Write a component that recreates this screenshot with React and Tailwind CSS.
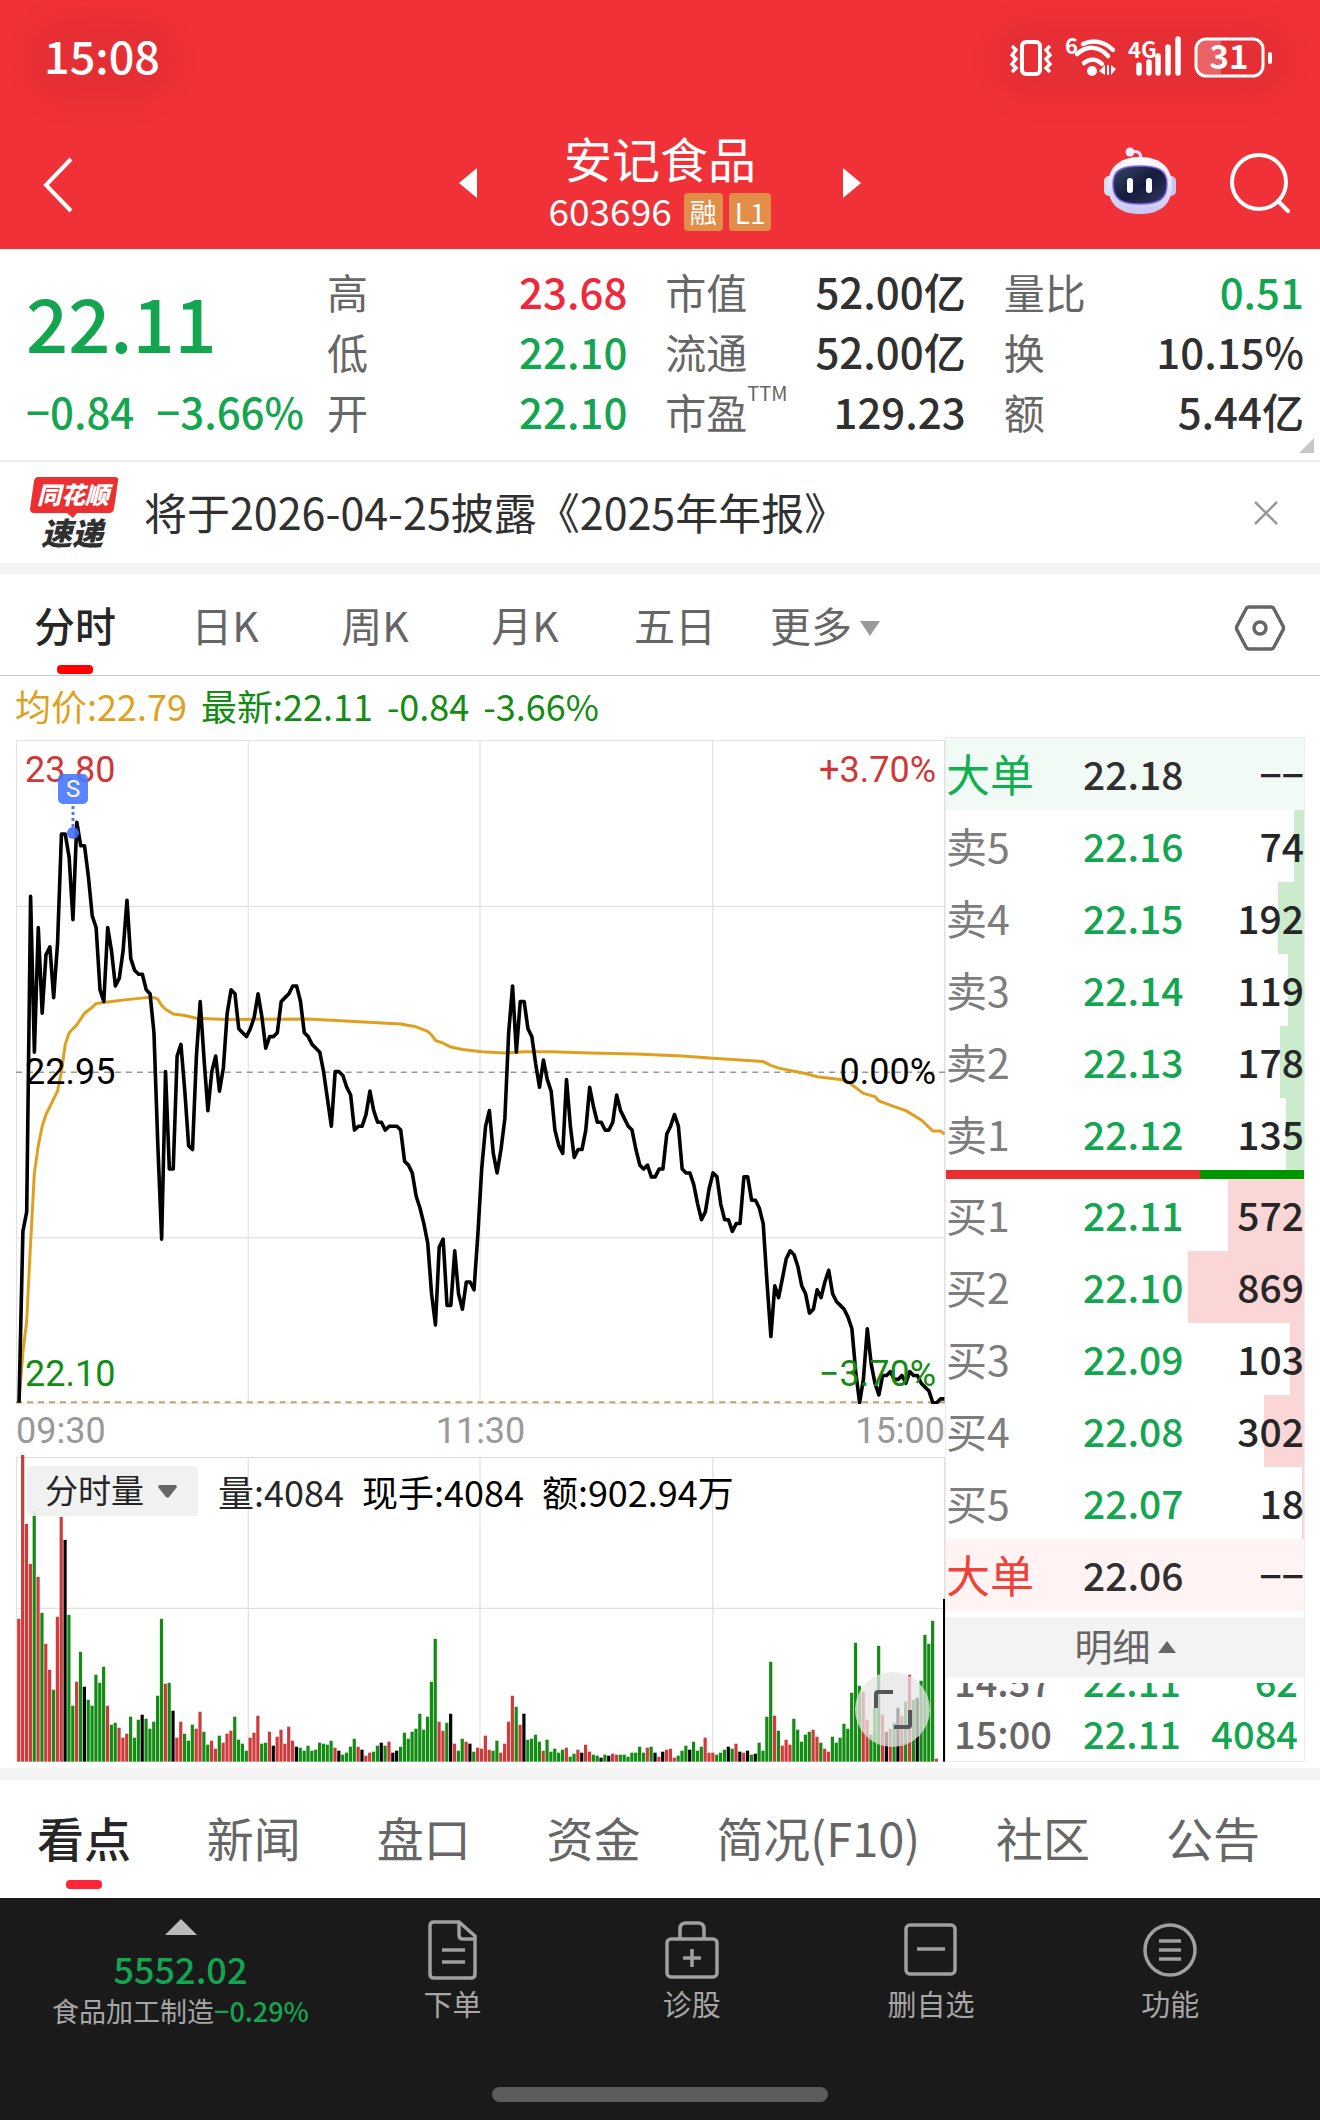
import React, { useState } from 'react';

const FONT = "font-['Noto_Sans_CJK_SC','Noto_Sans',sans-serif]";

const quoteColumns = [
    [
        { label: '高', value: '23.68', color: 'text-[#f0283c]' },
        { label: '低', value: '22.10', color: 'text-[#14a550]' },
        { label: '开', value: '22.10', color: 'text-[#14a550]' },
    ],
    [
        { label: '市值', value: '52.00亿', color: 'text-[#303030]' },
        { label: '流通', value: '52.00亿', color: 'text-[#303030]' },
        { label: '市盈', sup: 'TTM', value: '129.23', color: 'text-[#303030]' },
    ],
    [
        { label: '量比', value: '0.51', color: 'text-[#14a550]' },
        { label: '换', value: '10.15%', color: 'text-[#303030]' },
        { label: '额', value: '5.44亿', color: 'text-[#303030]' },
    ],
];

const asks = [
    ['卖5', '22.16', 74],
    ['卖4', '22.15', 192],
    ['卖3', '22.14', 119],
    ['卖2', '22.13', 178],
    ['卖1', '22.12', 135],
];

const bids = [
    ['买1', '22.11', 572],
    ['买2', '22.10', 869],
    ['买3', '22.09', 103],
    ['买4', '22.08', 302],
    ['买5', '22.07', 18],
];

// One value per minute, in cents above or below the previous close (22.95)
const prices = [
    -85, -41, -36, 45, 5, 37, 15, 30, 32, 19, 33, 61, 61, 55, 39, 64, 58, 58, 50, 40,
    37, 21, 18, 37, 31, 22, 24, 31, 44, 29, 26, 25, 25, 21, 20, 10, -19, -43, 0, -25,
    -25, 4, 7, -5, -19, -20, 4, 18, 3, -10, 0, 4, -5, 1, 15, 21, 20, 11, 10, 9,
    11, 14, 20, 14, 6, 9, 9, 10, 18, 19, 20, 22, 22, 18, 10, 9, 7, 6, 5, 0,
    -7, -14, 0, 0, -1, -4, -6, -15, -14, -14, -11, -5, -10, -13, -13, -15, -14, -14, -14, -15,
    -23, -24, -26, -32, -35, -39, -44, -57, -65, -45, -43, -60, -60, -46, -57, -61, -54, -54, -56, -42,
    -25, -14, -10, -21, -26, -20, -12, 10, 22, 5, 18, 18, 11, 9, 2, -4, 3, -2, -5, -15,
    -19, -21, -2, -14, -22, -20, -20, -15, -4, -9, -13, -13, -15, -15, -13, -6, -10, -12, -14, -15,
    -20, -24, -25, -24, -27, -27, -25, -25, -16, -14, -11, -14, -25, -26, -26, -29, -34, -38, -36, -30,
    -26, -27, -34, -38, -38, -41, -39, -39, -27, -27, -33, -33, -35, -39, -54, -68, -55, -58, -53, -48,
    -46, -47, -50, -55, -57, -62, -61, -56, -58, -54, -51, -57, -59, -60, -61, -63, -66, -77, -85, -79,
    -66, -75, -80, -83, -78, -78, -77, -79, -79, -78, -80, -77, -78, -78, -80, -81, -82, -85, -85, -84, -84,
];

// [minute, cents from previous close]
const average = [
    [0, -85], [1, -72], [2, -64], [3, -44], [4, -26], [5, -19], [6, -14], [7, -11], [8, -9], [9, -7],
    [10, -5], [11, 0], [12, 7], [13, 10], [14, 11], [15, 12], [17, 15], [19, 16.5], [20, 17.5], [24, 18],
    [28, 18.5], [33, 19], [35, 19], [36, 18.6], [37, 17], [38, 16], [40, 14.8], [43, 14.4], [46, 13.7],
    [54, 13.4], [75, 13.5], [99, 12.2], [103, 11.5], [106, 10.3], [107, 9.4], [108, 8], [110, 7.3],
    [112, 6.3], [115, 5.7], [120, 5.1], [126, 4.8], [131, 5.1], [138, 5.1], [148, 4.8], [160, 4.5],
    [172, 4], [180, 3.4], [193, 2.6], [195, 1.6], [197, 0.9], [200, 0.3], [204, -0.5], [207, -1.3],
    [213, -2], [215, -2.6], [217, -4.1], [219, -5.6], [222, -6.4], [223, -7.5], [227, -9], [230, -10],
    [234, -12.4], [237, -15.2], [239, -15.2], [240, -16],
];

// r = up, g = down, k = unchanged
const volumes = `
r143 r307 r238 r198 g251 r185 g149 r118 r92 g72 r145 r245 k222 g147 g56 r80 g110 k75 g62 g56
g87 g79 g95 r56 g37 g39 r34 r24 r28 g45 g24 g42 k47 g43 g33 g40 g66 g143 r78 g79
k51 r24 r40 g28 g21 g37 r33 r50 g30 g17 r21 r13 g26 r19 r28 r31 g45 g22 g18 g11
r24 r29 r46 g18 g19 r30 k16 r25 r32 r18 r35 r21 k15 g14 g11 g16 g11 g12 g19 g18
g17 g21 r14 k11 g7 g9 g15 g23 r15 k12 r6 r9 g10 g16 k19 g16 r20 k9 k11 g15
g29 g23 g30 g33 g48 g32 g45 g80 g123 r40 r31 g39 k48 r18 g11 g23 r20 k18 g10 r14
r13 r26 r12 g11 g21 r9 r18 r40 r66 g55 r37 k48 g22 g23 g27 g20 r11 g22 g10 g13
g9 g12 r14 g5 g8 r12 k9 r17 r10 g7 g6 k4 g7 k6 r8 r7 g7 g7 g5 g9
g9 g15 g9 r14 g15 k9 r5 k10 r12 r13 r4 g6 g11 g16 k12 g20 g11 g15 r24 r9
r9 g7 g9 g12 k15 g13 r18 k10 r9 k11 g7 k8 g19 g11 g45 g100 r46 g31 r16 r22
r17 g43 g32 g20 g27 g30 r32 r25 g19 r13 r10 g25 g19 g24 g38 g33 g69 g119 g76 r70
r42 g27 g54 g116 r47 k30 r33 g39 k54 r46 g60 r87 g62 k64 g81 g127 g118 g141 r3 k0 k163
`.trim().split(/\s+/).map((v) => ({ kind: v[0], size: Number(v.slice(1)) }));

const barFill = { r: '#cf3a3a', g: '#128c12', k: '#000000' };

const minuteX = (i) => 3 + i * 3.86;
const priceY = (cents) => 332 - cents * 3.9;
const toPoints = (list) => list.map(([i, c]) => `${minuteX(i).toFixed(1)},${priceY(c).toFixed(1)}`).join(' ');

function StatusBar() {
    return (
        <div className="flex h-[116px] items-center justify-between pl-[44px] pr-[46px]">
            <span className="rounded-full bg-[#e62f35] pb-2 text-[45px] font-medium leading-[46px] shadow-[0_0_24px_20px_#e62f35]">
                15:08
            </span>
            <div className="flex items-center rounded-full bg-[#e62f35] shadow-[0_0_24px_20px_#e62f35]">
                <svg className="h-[46px] w-[266px] overflow-visible" viewBox="0 0 266 46" fill="none" stroke="#fff">
                    {/* Vibrate */}
                    <rect x="14" y="6" width="18" height="32" rx="4" strokeWidth="4" />
                    <path d="M4 10l4 4-4 5 4 4-4 5 4 4-4 4M42 10l-4 4 4 5-4 4 4 5-4 4 4 4" strokeWidth="3.4" />
                    {/* Wi-Fi */}
                    <text x="57" y="18" fill="#fff" stroke="none" fontSize="22" fontWeight="700" fontFamily="Noto Sans CJK SC">6</text>
                    <path d="M75 8c11-5 22-2 30 6M69 18c10-9 22-8 31 2M76 27c6-5 13-4 18 1" strokeWidth="4.500" strokeLinecap="round" />
                    <circle cx="84" cy="35" r="5" fill="#fff" stroke="none" />
                    <path d="M97 29v10l-6-4zM99 29h2v10h-2zM103 29v10l5-6z" fill="#fff" stroke="none" />
                    {/* Signal */}
                    <text x="120" y="22" fill="#fff" stroke="none" fontSize="22" fontWeight="700" fontFamily="Noto Sans CJK SC">4G</text>
                    <path d="M131 29v8M141 26v11M150 20v17M160 11v26M170 3v34" strokeWidth="5.500" strokeLinecap="round" />
                    {/* Battery */}
                    <path d="M196 4h17v34h-17q-8 0-8-8v-18q0-8 8-8z" fill="#fff" fillOpacity=".25" stroke="none" />
                    <rect x="188" y="3" width="67" height="37" rx="10" strokeWidth="3" />
                    <path d="M262 18v8" strokeWidth="4" strokeLinecap="round" />
                    <text x="221" y="33" textAnchor="middle" fill="#fff" stroke="none" fontSize="33" fontWeight="700" fontFamily="Noto Sans CJK SC">31</text>
                </svg>
            </div>
        </div>
    );
}

function RobotIcon() {
    return (
        <svg className="h-[68px] w-[72px]" viewBox="0 0 72 68" fill="none">
            <defs>
                <linearGradient id="shell" x1="0" y1="0" x2="0" y2="1">
                    <stop offset="0" stopColor="#fff" />
                    <stop offset="1" stopColor="#c9c6f2" />
                </linearGradient>
                <linearGradient id="visor" x1="0" y1="0" x2="1" y2="1">
                    <stop offset="0" stopColor="#3c4664" />
                    <stop offset=".5" stopColor="#141c3e" />
                    <stop offset="1" stopColor="#34365c" />
                </linearGradient>
            </defs>
            <path d="M27 5c7-2 10 1 10 7" stroke="#e3dcf5" strokeWidth="3" />
            <circle cx="26" cy="5" r="4.500" fill="#f1ecfb" />
            <rect x="0" y="29" width="10" height="20" rx="5" fill="#dcdcf6" />
            <rect x="62" y="29" width="10" height="20" rx="5" fill="#c6c4f0" />
            <path d="M36 10c22 0 32 12 32 28 0 19-11 29-32 29S4 57 4 38c0-16 10-28 32-28z" fill="url(#shell)" />
            <path d="M36 19c18 0 27 4 27 18 0 15-8 20-27 20S9 52 9 37c0-14 9-18 27-18z" fill="url(#visor)" stroke="#7b63e8" strokeWidth="1.500" />
            <rect x="23" y="31" width="6" height="15" rx="3" fill="#fff" />
            <rect x="42" y="31" width="6" height="15" rx="3" fill="#fff" />
        </svg>
    );
}

function Header() {
    return (
        <header className="bg-[#f03238] pt-px text-white">
            <StatusBar />
            <div className="flex h-[132px] items-center justify-between pl-[42px] pr-[30px]">
                <div className="flex w-[200px] pt-1">
                    <button aria-label="返回">
                        <svg className="h-[56px] w-[32px]" viewBox="0 0 32 56" fill="none" stroke="#fff" strokeWidth="4">
                            <path d="M29 2L4 28l25 26" />
                        </svg>
                    </button>
                </div>
                <div className="flex items-center">
                    <button aria-label="上一只">
                        <svg className="h-[30px] w-[18px]" viewBox="0 0 18 30" fill="#fff"><path d="M18 0v30L0 15z" /></svg>
                    </button>
                    <div className="flex w-[366px] flex-col items-center pb-[6px]">
                        <h1 className="text-[48px] leading-[60px]">安记食品</h1>
                        <div className="flex h-[46px] items-center gap-[6px]">
                            <span className="mr-[6px] text-[37px] leading-[44px]">603696</span>
                            <span className="mt-[4px] rounded-sm bg-[#e28d48] px-[6px] text-[27px] leading-[38px]">融</span>
                            <span className="mt-[4px] rounded-sm bg-[#e28d48] px-[6px] text-[28px] leading-[38px]">L1</span>
                        </div>
                    </div>
                    <button aria-label="下一只">
                        <svg className="h-[30px] w-[18px]" viewBox="0 0 18 30" fill="#fff"><path d="M0 0v30l18-15z" /></svg>
                    </button>
                </div>
                <div className="flex w-[212px] items-center justify-end gap-[54px]">
                    <button aria-label="智能助手" className="pb-1"><RobotIcon /></button>
                    <button aria-label="搜索" className="pb-px">
                        <svg className="h-[60px] w-[60px]" viewBox="0 0 60 60" fill="none" stroke="#fff" strokeWidth="4">
                            <circle cx="29" cy="29" r="27" />
                            <path d="M48 48l10 10" strokeLinecap="round" />
                        </svg>
                    </button>
                </div>
            </div>
        </header>
    );
}

function Quote() {
    return (
        <section className="relative grid grid-cols-[263px_1fr_1fr_1fr] gap-x-[38px] border-b-2 border-[#ececec] pb-[19px] pl-[26px] pr-4 pt-[12px]">
            <div className="whitespace-nowrap font-medium text-[#14a550]">
                <p className="text-[74px] leading-[120px]">22.11</p>
                <p className="flex gap-[22px] text-[42px] leading-[60px]">
                    <span>−0.84</span>
                    <span>−3.66%</span>
                </p>
            </div>
            {quoteColumns.map((rows) => (
                <dl key={rows[0].label}>
                    {rows.map((row) => (
                        <div key={row.label} className="flex h-[60px] items-center justify-between whitespace-nowrap">
                            <dt className="flex text-[41px] leading-[60px] text-[#666]">
                                {row.label}
                                {row.sup && <sup className="top-0 text-[20px] leading-[24px]">{row.sup}</sup>}
                            </dt>
                            <dd className={`text-[42px] font-medium leading-[60px] ${row.color}`}>{row.value}</dd>
                        </div>
                    ))}
                </dl>
            ))}
            <svg className="absolute bottom-[7px] right-[6px] h-[15px] w-[15px]" viewBox="0 0 15 15" fill="#c8c8c8">
                <path d="M15 0v15H0z" />
            </svg>
        </section>
    );
}

function NewsBar() {
    const [open, setOpen] = useState(true);
    if (!open) return null;

    return (
        <section className="flex h-[101px] items-center pl-[28px] pr-[42px]">
            <svg className="h-[76px] w-[92px] overflow-visible" viewBox="0 0 92 76">
                <path d="M10 2h77q4 0 3 4l-4 28q-1 4-5 4H49l-4 5-6-5H6q-4 0-4-4L6 6q1-4 4-4z" fill="#ea3030" />
                <text x="45" y="29" textAnchor="middle" fill="#fff" fontSize="24" fontWeight="900" fontStyle="italic" fontFamily="Noto Sans CJK SC">同花顺</text>
                <text x="44" y="70" textAnchor="middle" fill="#303030" fontSize="31" fontWeight="900" fontStyle="italic" fontFamily="Noto Sans CJK SC">速递</text>
            </svg>
            <a href="#" className="ml-[24px] flex-1 pb-1 text-[43px] leading-[60px] text-[#303030]">将于2026-04-25披露《2025年年报》</a>
            <button aria-label="关闭" onClick={() => setOpen(false)}>
                <svg className="h-[24px] w-[24px]" viewBox="0 0 24 24" stroke="#999" strokeWidth="2.500">
                    <path d="M1 1l22 22M23 1L1 23" />
                </svg>
            </button>
        </section>
    );
}

function PeriodTabs() {
    const [active, setActive] = useState('分时');

    return (
        <nav className="flex h-[101px] items-stretch border-b border-[#c8c8c8] pr-[34px]">
            {['分时', '日K', '周K', '月K', '五日', '更多'].map((tab) => (
                <button
                    key={tab}
                    onClick={() => setActive(tab)}
                    className={`relative flex w-[150px] items-center justify-center gap-2 whitespace-nowrap text-[41px] ${active === tab ? 'font-medium text-[#262626]' : 'text-[#666]'}`}
                >
                    {tab}
                    {tab === '更多' && (
                        <svg className="mt-[6px] h-[15px] w-[20px]" viewBox="0 0 20 15" fill="#999"><path d="M0 0h20L10 15z" /></svg>
                    )}
                    {active === tab && <span className="absolute bottom-px left-[57px] h-[9px] w-[36px] rounded bg-[#f00]" />}
                </button>
            ))}
            <button aria-label="设置" className="ml-auto pt-[5px]">
                <svg className="h-[48px] w-[52px]" viewBox="0 0 52 48" fill="none" stroke="#666" strokeWidth="3.500">
                    <path d="M15 3h22q2 0 3 2l9 17q1 2 0 4l-9 17q-1 2-3 2H15q-2 0-3-2L3 26q-1-2 0-4l9-17q1-2 3-2z" />
                    <circle cx="26" cy="24" r="6" />
                </svg>
            </button>
        </nav>
    );
}

function PriceChart() {
    return (
        <div className="relative font-['Roboto',sans-serif] text-[36px] leading-[36px]">
            <svg className="block h-auto w-full" viewBox="0 0 930 665" fill="none">
                <path d="M0 .5h930M0 166.500h930M0 498.500h930M.5 0v664M232.500 0v664M464.500 0v664M697.500 0v664M929.500 0v664M0 664.500h930" stroke="#e2e2e2" strokeWidth="1.200" />
                <path d="M0 332.500h930" stroke="#999" strokeWidth="1.500" strokeDasharray="6 5" />
                <path d="M0 663h930" stroke="#c6a26c" strokeWidth="2" strokeDasharray="6 5" />
                <polyline points={toPoints(average)} stroke="#dfa020" strokeWidth="3" strokeLinejoin="round" />
                <polyline points={toPoints(prices.map((c, i) => [i, c]))} stroke="#000" strokeWidth="3.600" strokeLinejoin="round" />
            </svg>
            <span className="absolute left-[9px] top-[12px] text-[#d03838]">23.80</span>
            <span className="absolute right-[9px] top-[12px] text-[#d03838]">+3.70%</span>
            <span className="absolute left-[9px] top-[314px] text-black">22.95</span>
            <span className="absolute right-[9px] top-[314px] text-black">0.00%</span>
            <span className="absolute bottom-[12px] left-[9px] text-[#128c12]">22.10</span>
            <span className="absolute bottom-[12px] right-[9px] text-[#128c12]">−3.70%</span>
            {/* Sell marker */}
            <span className="absolute left-[42px] top-[34px] h-[30px] w-[30px] rounded-[5px] bg-[#4878ff]/90 text-center text-[24px] leading-[30px] text-white">S</span>
            <svg className="absolute left-[51px] top-[65px] h-[34px] w-[12px]" viewBox="0 0 12 34" fill="none">
                <path d="M6 1v24" stroke="#4878ff" strokeWidth="3" strokeDasharray="3 3" />
                <circle cx="6" cy="28" r="6" fill="#4070f4" fillOpacity=".9" />
            </svg>
        </div>
    );
}

function VolumeChart() {
    return (
        <div className="relative">
            <svg className="block h-auto w-full overflow-visible" viewBox="0 0 930 305" fill="none">
                <path d="M0 .5h930M0 151.500h930M.5 0v305M232.500 0v305M464.500 0v305M697.500 0v305M929.500 0v305" stroke="#e0e0e0" strokeWidth="1.200" />
                {volumes.map((bar, i) => (
                    <rect
                        key={i}
                        x={i === 240 ? 928 : (1.2 + i * 3.86).toFixed(2)}
                        y={305 - bar.size}
                        width={i === 240 ? 2 : 3.2}
                        height={bar.size}
                        fill={barFill[bar.kind]}
                    />
                ))}
            </svg>
            <div className="absolute left-[11px] top-[9px] flex items-center whitespace-nowrap text-[36px] leading-[50px] text-black">
                <div className="relative mr-[20px]">
                    <select aria-label="指标" defaultValue="分时量" className="block h-[50px] w-[171px] appearance-none rounded bg-[#efefef]/90 pb-1 pl-[18px] text-[33px] leading-[46px] text-[#262626]">
                        <option>分时量</option>
                        <option>MACD</option>
                    </select>
                    <svg className="pointer-events-none absolute right-[21px] top-[19px] h-[13px] w-[19px]" viewBox="0 0 19 13" fill="#666">
                        <path d="M1 0h17l1 2-8 10q-1 1-3 0L0 2z" />
                    </svg>
                </div>
                <span className="mr-[18px] text-[#262626]">量:4084</span>
                <span className="mr-[18px]">现手:4084</span>
                <span>额:902.94万</span>
            </div>
            <button aria-label="全屏" className="absolute bottom-[15px] right-[15px] flex h-[75px] w-[75px] items-center justify-center rounded-full bg-[#e6e6e6]/75">
                <svg className="h-[40px] w-[40px]" viewBox="0 0 40 40" fill="none" stroke="#555" strokeWidth="4">
                    <path d="M3 19V5q0-2 2-2h15M37 21v15q0 2-2 2H21" />
                </svg>
            </button>
        </div>
    );
}

function BookRow({ label, price, size, barColor }) {
    return (
        <tr className="h-[72px] leading-[60px]">
            <th scope="row" className="pb-[3px] text-left text-[41px] font-normal text-[#7d7d7d]">{label}</th>
            <td className="pb-[3px] font-medium text-[#14a550]">{price}</td>
            <td className="relative pb-[3px] text-right font-medium text-[#262626]">
                <span className={`absolute inset-y-0 right-0 ${barColor}`} style={{ width: `${(size / 869) * 100}%` }} />
                <span className="relative">{size}</span>
            </td>
        </tr>
    );
}

function BigOrderRow({ price, tint, color }) {
    return (
        <tr className={`h-[72px] leading-[60px] ${tint}`}>
            <th scope="row" className={`pb-[3px] text-left text-[44px] font-normal ${color}`}>大单</th>
            <td className="pb-[3px] font-medium text-[#303030]">{price}</td>
            <td className="pb-[3px] text-right font-medium text-[#262626]">−−</td>
        </tr>
    );
}

function BookColumns() {
    return (
        <colgroup>
            <col className="w-[137px]" />
            <col className="w-[105px]" />
            <col />
        </colgroup>
    );
}

function OrderBook() {
    return (
        <aside className="-mt-[3px] flex w-[360px] shrink-0 flex-col border border-[#ececec]">
            <table className="w-full table-fixed text-[39px]">
                <BookColumns />
                <tbody>
                    <BigOrderRow price="22.18" tint="bg-[#f2faf6]" color="text-[#10b050]" />
                    {asks.map(([label, price, size]) => (
                        <BookRow key={label} label={label} price={price} size={size} barColor="bg-[#cceacc]" />
                    ))}
                </tbody>
            </table>
            <div className="flex h-[9px]">
                <span className="w-[71%] bg-[#e83030]" />
                <span className="flex-1 bg-[#009600]" />
            </div>
            <table className="w-full table-fixed text-[39px]">
                <BookColumns />
                <tbody>
                    {bids.map(([label, price, size]) => (
                        <BookRow key={label} label={label} price={price} size={size} barColor="bg-[#fad6d6]" />
                    ))}
                    <BigOrderRow price="22.06" tint="bg-[#fff4f3]" color="text-[#ee4238]" />
                </tbody>
            </table>
            <button className="mt-[6px] flex h-[60px] items-center justify-center gap-[7px] bg-[#f3f3f3] pb-1 text-[38px] leading-[54px] text-[#666]">
                明细
                <svg className="mt-1 h-[12px] w-[18px]" viewBox="0 0 18 12" fill="#666"><path d="M9 0l9 12H0z" /></svg>
            </button>
            {/* Trade ticks, scrolled to the newest */}
            <div className="mt-[6px] flex h-[78px] flex-col justify-end overflow-hidden pb-[2px]">
                <table className="w-full table-fixed text-[38px] font-medium leading-[52px]">
                    <BookColumns />
                    <tbody className="text-[#14a550]">
                        <tr>
                            <th scope="row" className="pl-[8px] text-left font-medium text-[#666]">14:57</th>
                            <td>22.11</td>
                            <td className="pr-[6px] text-right">62</td>
                        </tr>
                        <tr>
                            <th scope="row" className="pl-[8px] text-left font-medium text-[#666]">15:00</th>
                            <td>22.11</td>
                            <td className="pr-[6px] text-right">4084</td>
                        </tr>
                    </tbody>
                </table>
            </div>
        </aside>
    );
}

function ChartPanel() {
    return (
        <section>
            <p className="flex h-[64px] items-center gap-[14px] whitespace-nowrap pb-[6px] pl-[15px] text-[36px] leading-[54px]">
                <span className="text-[#dfa020]">均价:22.79</span>
                <span className="flex gap-[14px] text-[#128c12]">
                    <span>最新:22.11</span>
                    <span>-0.84</span>
                    <span>-3.66%</span>
                </span>
            </p>
            <div className="flex pl-4 pr-[15px]">
                <div className="flex min-w-0 flex-1 flex-col">
                    <PriceChart />
                    <div className="flex h-[53px] items-center justify-between font-['Roboto',sans-serif] text-[36px] leading-[52px] text-[#999]">
                        <span>09:30</span>
                        <span>11:30</span>
                        <span>15:00</span>
                    </div>
                    <VolumeChart />
                </div>
                <OrderBook />
            </div>
        </section>
    );
}

function SectionTabs() {
    const [active, setActive] = useState('看点');

    return (
        <nav className="flex h-[118px] items-stretch justify-between pl-[37px] pr-[60px]">
            {['看点', '新闻', '盘口', '资金', '简况(F10)', '社区', '公告'].map((tab) => (
                <button
                    key={tab}
                    onClick={() => setActive(tab)}
                    className={`relative flex items-center justify-center whitespace-nowrap pb-1 text-[47px] ${active === tab ? 'font-medium text-[#262626]' : 'text-[#666]'}`}
                >
                    {tab}
                    {active === tab && <span className="absolute bottom-[9px] left-[29px] h-[9px] w-[36px] rounded bg-[#ff2436]" />}
                </button>
            ))}
        </nav>
    );
}

const actions = [
    {
        label: '下单',
        icon: (
            <>
                <path d="M9 3h25l16 14v38q0 4-4 4H9q-4 0-4-4V7q0-4 4-4z" />
                <path d="M34 4v12q0 4 4 4h12M17 31h23M17 43h23" />
            </>
        ),
    },
    {
        label: '诊股',
        icon: (
            <>
                <rect x="3" y="20" width="50" height="38" rx="4" />
                <path d="M16 20V10q0-6 6-6h12q6 0 6 6v10M28 30v18M19 39h18" />
            </>
        ),
    },
    {
        label: '删自选',
        icon: (
            <>
                <rect x="3" y="6" width="49" height="49" rx="4" />
                <path d="M14 30h28" />
            </>
        ),
    },
    {
        label: '功能',
        icon: (
            <>
                <circle cx="28" cy="31" r="25" />
                <path d="M17 22h22M17 31h22M17 40h22" />
            </>
        ),
    },
];

function BottomBar() {
    return (
        <footer className="bg-[#1a1a1a] pb-[18px]">
            <div className="flex h-[189px] items-start pr-[30px] pt-[21px]">
                <button className="flex w-[333px] shrink-0 flex-col items-center whitespace-nowrap pl-[28px]">
                    <svg className="h-[16px] w-[32px]" viewBox="0 0 32 16" fill="#bbb"><path d="M16 0l16 16H0z" /></svg>
                    <span className="mt-[8px] text-[36px] font-medium leading-[50px] text-[#14a550]">5552.02</span>
                    <span className="text-[27px] leading-[36px] text-[#a6a6a6]">
                        食品加工制造<span className="font-medium text-[#14a550]">−0.29%</span>
                    </span>
                </button>
                <div className="flex flex-1">
                    {actions.map((action) => (
                        <button key={action.label} className="flex flex-1 flex-col items-center text-[29px] leading-[44px] text-[#a6a6a6]">
                            <svg className="h-[62px] w-[56px]" viewBox="0 0 56 62" fill="none" stroke="#a0a0a0" strokeWidth="3.500">
                                {action.icon}
                            </svg>
                            {action.label}
                        </button>
                    ))}
                </div>
            </div>
            <div className="mx-auto h-[15px] w-[336px] rounded-full bg-[#5c5c5c]" />
        </footer>
    );
}

export default function App() {
    return (
        <div className={`min-h-screen bg-white ${FONT}`}>
            <Header />
            <Quote />
            <NewsBar />
            <div className="h-[12px] bg-[#f4f4f4]" />
            <PeriodTabs />
            <ChartPanel />
            <div className="mt-[6px] h-[12px] bg-[#f4f4f4]" />
            <SectionTabs />
            <BottomBar />
        </div>
    );
}
